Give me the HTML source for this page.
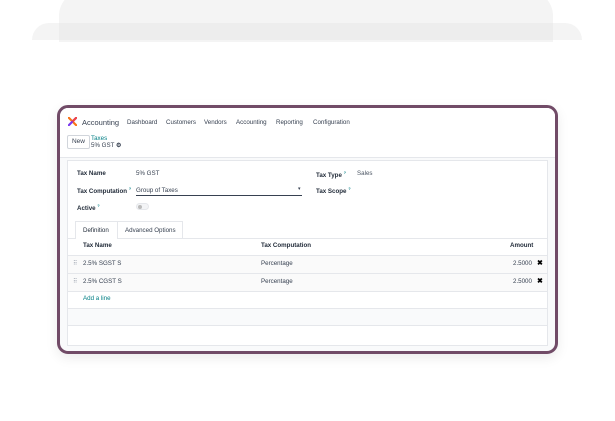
<!DOCTYPE html>
<html><head><style>
*{margin:0;padding:0;box-sizing:border-box}
body{width:615px;height:421px;background:#fff;position:relative;overflow:hidden;font-family:"Liberation Sans",sans-serif;color:#374151}
.a{position:absolute;left:59px;top:-10px;width:494px;height:52px;background:#f4f4f4;border-radius:26px 26px 0 0}
.b{position:absolute;left:32px;top:23px;width:550px;height:17px;background:#f4f4f4;border-radius:20px 20px 0 0}
.ab{position:absolute;left:59px;top:23px;width:494px;height:17px;background:#ededed}
.card{position:absolute;left:57px;top:105px;width:501px;height:249px;border:3px solid #714b67;border-radius:11px;background:#f9fafb;overflow:hidden;box-shadow:0 4px 12px rgba(0,0,0,.08)}
.t{position:absolute;font-size:6.2px;white-space:nowrap}
.b6{font-weight:bold;color:#1f2937}
.sheet{position:absolute;left:7px;top:52px;width:481px;height:186px;background:#fff;border:1px solid #e5e7eb}
.row{position:absolute;left:0;width:479px;border-bottom:1px solid #e5e7eb}
</style></head><body>
<div class="b"></div><div class="a"></div><div class="ab"></div>
<div class="card">
<div style="position:absolute;left:0;top:0;width:495px;height:50px;background:#fff;border-bottom:1px solid #e5e7eb"></div>
<svg style="position:absolute;left:8px;top:9px" width="9" height="9" viewBox="0 0 9 9"><path d="M0 0L9 9" stroke="#f97316" stroke-width="2.2"/><path d="M9 0L0 9" stroke="#7c3aed" stroke-width="2.2"/><path d="M9 0L4.5 4.5" stroke="#ef4444" stroke-width="2.2"/></svg>
<div class="t" style="left:22px;top:10px;font-size:7.5px;color:#374151">Accounting</div>
<div class="t" style="left:67px;top:11px;color:#374151">Dashboard</div>
<div class="t" style="left:106px;top:11px">Customers</div>
<div class="t" style="left:144px;top:11px">Vendors</div>
<div class="t" style="left:176px;top:11px">Accounting</div>
<div class="t" style="left:216px;top:11px">Reporting</div>
<div class="t" style="left:253px;top:11px">Configuration</div>
<div style="position:absolute;left:7px;top:27px;width:23px;height:14px;border:1px solid #d1d5db;border-radius:2px;font-size:6.5px;text-align:center;line-height:12px;color:#374151">New</div>
<div class="t" style="left:31px;top:27px;color:#017e84">Taxes</div>
<div class="t" style="left:31px;top:34px;color:#374151">5% GST <b>⚙</b></div>
<div class="sheet">
<div class="t b6" style="left:9px;top:9px">Tax Name</div>
<div class="t" style="left:68px;top:9px">5% GST</div>
<div class="t b6" style="left:9px;top:25px">Tax Computation <sup style="color:#017e84;font-size:4px">?</sup></div>
<div class="t" style="left:68px;top:26px">Group of Taxes</div>
<div style="position:absolute;left:68px;top:34px;width:166px;border-bottom:1px solid #374151"></div>
<div class="t" style="left:230px;top:25px;font-size:5px">▾</div>
<div class="t b6" style="left:9px;top:42px">Active <sup style="color:#017e84;font-size:4px">?</sup></div>
<div style="position:absolute;left:68px;top:42px;width:13px;height:7px;border-radius:4px;background:#f3f4f6;border:1px solid #e5e7eb"><div style="position:absolute;left:1px;top:1px;width:4px;height:4px;border-radius:2px;background:#bbb"></div></div>
<div class="t b6" style="left:248px;top:9px">Tax Type <sup style="color:#017e84;font-size:4px">?</sup></div>
<div class="t" style="left:289px;top:9px;color:#4b5563">Sales</div>
<div class="t b6" style="left:248px;top:25px">Tax Scope <sup style="color:#017e84;font-size:4px">?</sup></div>
<div style="position:absolute;left:0;top:77px;width:479px;border-bottom:1px solid #e5e7eb"></div>
<div style="position:absolute;left:7px;top:60px;width:43px;height:18px;background:#fff;border:1px solid #e5e7eb;border-bottom:none"></div>
<div class="t" style="left:15px;top:66px;color:#1f2937">Definition</div>
<div style="position:absolute;left:50px;top:60px;width:65px;height:17px;border:1px solid #e5e7eb;border-bottom:none;border-left:none"></div>
<div class="t" style="left:57px;top:66px">Advanced Options</div>
<div class="t b6" style="left:15px;top:81px">Tax Name</div>
<div class="t b6" style="left:193px;top:81px">Tax Computation</div>
<div class="t b6" style="left:442px;top:81px">Amount</div>
<div class="row" style="top:77px;height:18px"></div>
<div class="row" style="top:95px;height:18px;background:#fafafa"></div>
<div class="row" style="top:113px;height:18px;background:#fafafa"></div>
<div class="t" style="left:5px;top:99px;color:#9ca3af">⠿</div>
<div class="t" style="left:15px;top:99px">2.5% SGST S</div>
<div class="t" style="left:193px;top:99px">Percentage</div>
<div class="t" style="left:445px;top:99px">2.5000</div>
<div class="t b6" style="left:469px;top:98px;color:#000;font-size:7px">✖</div>
<div class="t" style="left:5px;top:117px;color:#9ca3af">⠿</div>
<div class="t" style="left:15px;top:117px">2.5% CGST S</div>
<div class="t" style="left:193px;top:117px">Percentage</div>
<div class="t" style="left:445px;top:117px">2.5000</div>
<div class="t b6" style="left:469px;top:116px;color:#000;font-size:7px">✖</div>
<div class="t" style="left:15px;top:134px;color:#017e84">Add a line</div>
<div class="row" style="top:131px;height:17px"></div>
<div class="row" style="top:148px;height:17px;background:#f9fafb"></div>
</div>
</div>
</body></html>
